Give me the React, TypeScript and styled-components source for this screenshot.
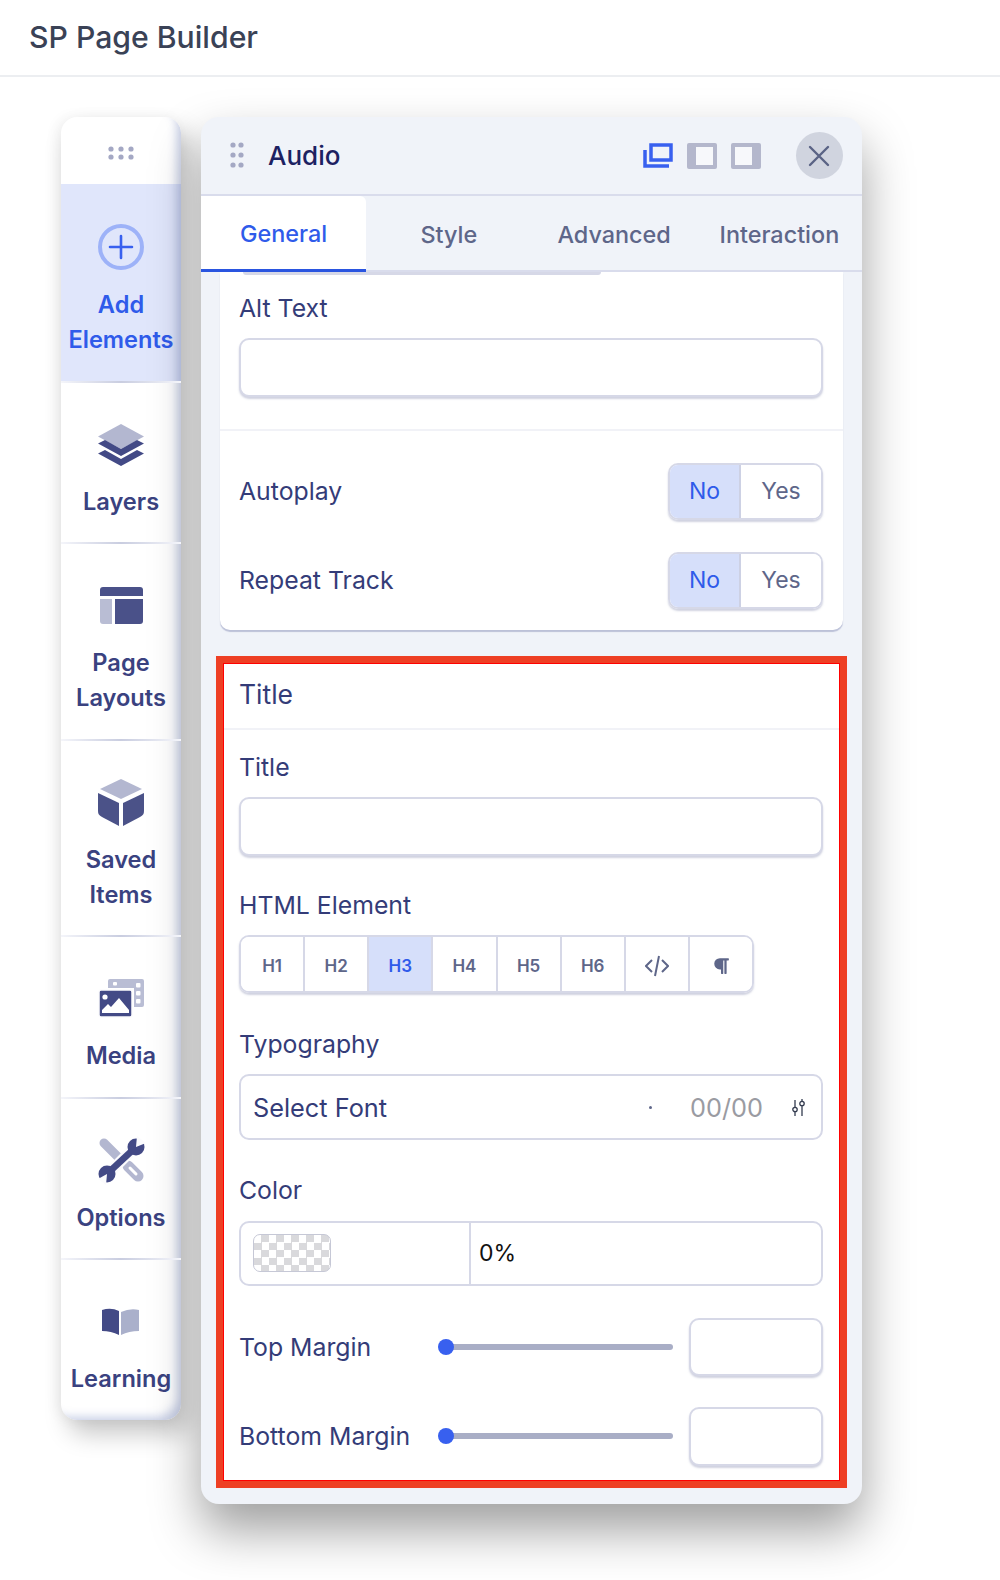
import React from 'react';
import styled, { createGlobalStyle } from 'styled-components';
import { FaParagraph } from 'react-icons/fa';

const GlobalStyle = createGlobalStyle`
  html, body { margin: 0; padding: 0; background: #fff; }
  body { font-family: Inter, "Liberation Sans", sans-serif; overflow: hidden; }
  * { box-sizing: border-box; }
`;

const Page = styled.div`
  width: 1000px;
  height: 1580px;
  overflow: hidden;
  background: #fff;
`;

const TopBar = styled.header`
  height: 77px;
  padding-left: 29px;
  display: flex;
  align-items: center;
  border-bottom: 2px solid #eceef1;
  font-size: 30.2px;
  font-weight: 500;
  color: #3a4256;
  padding-bottom: 2px;
`;

const Workspace = styled.main`
  display: flex;
  align-items: flex-start;
  gap: 20px;
  padding: 40px 0 0 61px;
`;

// Left rail with the builder sections.
const Sidebar = styled.nav`
  width: 120px;
  background: #fff;
  border-radius: 16px;
  overflow: hidden;
  box-shadow: 8px 14px 24px rgba(0, 0, 0, 0.22), -4px 0 14px rgba(0, 0, 0, 0.05);
  position: relative;
  &::after {
    content: '';
    position: absolute;
    inset: 0;
    border-radius: 16px;
    pointer-events: none;
    box-shadow: inset -9px -8px 10px -5px rgba(125, 140, 195, 0.42);
  }
`;

const RailGrip = styled.div`
  height: 67px;
  padding-top: 4px;
  display: flex;
  align-items: center;
  justify-content: center;
`;

const RailItem = styled.div<{ $active?: boolean }>`
  padding: 40px 0 23.5px;
  display: flex;
  flex-direction: column;
  align-items: center;
  gap: 17px;
  background: ${p => (p.$active ? '#e0e6fb' : 'transparent')};
  color: ${p => (p.$active ? '#2f5bea' : '#3a4280')};
  svg { overflow: visible; }
`;

const RailLabel = styled.div`
  font-size: 23.6px;
  font-weight: 600;
  line-height: 35px;
  text-align: center;
  white-space: pre-line;
  margin: 0 -6px;
`;

const RailRule = styled.div`
  height: 2px;
  margin-bottom: -2px;
  position: relative;
  z-index: 1;
  background: linear-gradient(90deg, #f4f5fa 0%, #c9cde0 50%, #f4f5fa 100%);
`;

// Settings window.
const Panel = styled.section`
  width: 661px;
  background: #f0f3f9;
  border-radius: 18px;
  padding-bottom: 16px;
  position: relative;
  box-shadow: 0 26px 50px rgba(0, 0, 0, 0.38);
`;

const PanelHead = styled.div`
  height: 79px;
  padding: 0 19.5px 0 29px;
  display: flex;
  align-items: center;
  border-bottom: 2px solid #d9dcec;
`;

const PanelTitle = styled.h1`
  margin: 0 0 0 24px;
  font-size: 26px;
  font-weight: 500;
  color: #1c2162;
  flex: 1;
`;

const ViewIcons = styled.div`
  display: flex;
  gap: 14px;
  margin-right: 35px;
  align-items: center;
`;

const CloseButton = styled.div`
  width: 47px;
  height: 47px;
  border-radius: 50%;
  background: #d0d4df;
  display: flex;
  align-items: center;
  justify-content: center;
`;

const TabStrip = styled.div`
  height: 76px;
  display: flex;
  border-bottom: 2px solid #d9dcec;
`;

const Tab = styled.div<{ $active?: boolean }>`
  flex: 1;
  display: flex;
  align-items: center;
  justify-content: center;
  padding-top: 2px;
  font-size: 23.4px;
  font-weight: 500;
  color: ${p => (p.$active ? '#2f5bea' : '#5e6689')};
  background: ${p => (p.$active ? '#fff' : 'transparent')};
  border-radius: ${p => (p.$active ? '0 6px 0 0' : '0')};
  border-bottom: ${p => (p.$active ? '3px solid #2a55e0' : '0')};
  height: ${p => (p.$active ? '76px' : '74px')};
`;

const PanelBody = styled.div`
  padding: 0 15px;
`;

const SettingsCard = styled.div`
  margin: 0 4px 26px;
  background: #fff;
  border-radius: 0 0 10px 10px;
  box-shadow: 0 2px 1px #bcc1d8;
  padding-bottom: 21px;
`;

const ClippedInput = styled.div`
  width: 358px;
  height: 3px;
  margin-left: 23px;
  background: #d6d8e7;
  border-radius: 0 0 6px 6px;
`;

const CardBlock = styled.div`
  padding: 17px 20px 32px 19px;
  border-bottom: 2px solid #f1f2f7;
`;

const FieldLabel = styled.label`
  display: block;
  font-size: 24.8px;
  line-height: 32px;
  color: #343c78;
`;

const SectionTitle = styled(FieldLabel)`
  font-size: 26.5px;
`;

const TextInput = styled.div`
  height: 58.5px;
  margin-top: 14px;
  background: #fff;
  border: 2px solid #d6d8e7;
  border-radius: 10px;
  box-shadow: 0 2px 2px rgba(120, 125, 165, 0.35);
`;

const ToggleRows = styled.div`
  padding: 32px 20px 0 19px;
  display: flex;
  flex-direction: column;
  gap: 32px;
`;

const ToggleRow = styled.div`
  display: flex;
  align-items: center;
  justify-content: space-between;
`;

const Toggle = styled.div`
  width: 155px;
  height: 57px;
  display: flex;
  border: 2px solid #d6d8e7;
  border-radius: 10px;
  overflow: hidden;
  box-shadow: 0 2px 2px rgba(120, 125, 165, 0.35);
`;

const ToggleOption = styled.div<{ $on?: boolean }>`
  width: ${p => (p.$on ? '72px' : '81px')};
  display: flex;
  align-items: center;
  justify-content: center;
  font-size: 23px;
  background: ${p => (p.$on ? '#d6dffa' : '#fff')};
  color: ${p => (p.$on ? '#2f5bea' : '#5e6689')};
  border-right: ${p => (p.$on ? '2px solid #cdd1e4' : '0')};
`;

// Highlighted block with the annotation frame.
const TitleSection = styled.div`
  background: #fff;
  border: 8px solid #ee3f24;
  outline: 1px solid #f00;
  outline-offset: -8px;
`;

const SectionHead = styled.div`
  height: 66px;
  padding: 14px 15px 0;
  border-bottom: 2px solid #f1f2f7;
`;

const SectionBody = styled.div`
  padding: 0 16px 14px 15px;
`;

const Field = styled.div<{ $top: number }>`
  margin-top: ${p => p.$top}px;
`;

const ButtonGroup = styled.div`
  width: 515px;
  height: 58px;
  margin-top: 14px;
  display: flex;
  border: 2px solid #d6d8e7;
  border-radius: 10px;
  overflow: hidden;
  box-shadow: 0 2px 2px rgba(120, 125, 165, 0.35);
`;

const HeadingButton = styled.div<{ $on?: boolean }>`
  flex: 1;
  display: flex;
  align-items: center;
  justify-content: center;
  padding-top: 4px;
  font-size: 17px;
  font-weight: 600;
  color: ${p => (p.$on ? '#2f5bea' : '#5e6689')};
  background: ${p => (p.$on ? '#d6dffa' : '#fff')};
  border-right: 2px solid #d6d8e7;
  &:last-child { border-right: 0; }
`;

const FontSelect = styled.div`
  height: 66px;
  margin-top: 14px;
  padding: 0 16px 0 12px;
  display: flex;
  align-items: center;
  border: 2px solid #d6d8e7;
  border-radius: 10px;
  font-size: 25.3px;
  color: #343c78;
`;

const FontName = styled.span`
  flex: 1;
`;

const FontDot = styled.span`
  width: 3px;
  height: 3px;
  border-radius: 50%;
  background: #5e6689;
  margin-right: 38px;
`;

const FontSize = styled.span`
  color: #9a9ba2;
  margin-right: 29px;
`;

const ColorBox = styled.div`
  height: 65px;
  margin-top: 15px;
  display: flex;
  border: 2px solid #d6d8e7;
  border-radius: 10px;
`;

const ColorPick = styled.div`
  width: 230px;
  padding-left: 12px;
  display: flex;
  align-items: center;
  border-right: 2px solid #d6d8e7;
`;

const Swatch = styled.div`
  width: 78px;
  height: 38px;
  border-radius: 7px;
  border: 1px solid #c6c8d6;
  background: repeating-conic-gradient(#d9d9dc 0% 25%, #fff 0% 50%) 0 0 / 15px 15px;
`;

const ColorValue = styled.div`
  flex: 1;
  display: flex;
  align-items: center;
  padding-left: 8px;
  font-size: 23px;
  color: #111;
`;

const SliderRow = styled.div<{ $top: number }>`
  margin-top: ${p => p.$top}px;
  display: flex;
  align-items: center;
`;

const SliderLabel = styled(FieldLabel)`
  width: 200px;
  white-space: nowrap;
`;

const Track = styled.div`
  width: 234px;
  height: 6px;
  background: #a9aec6;
  border-radius: 3px;
  position: relative;
`;

const Thumb = styled.span`
  position: absolute;
  left: -1px;
  top: -5px;
  width: 16px;
  height: 16px;
  border-radius: 50%;
  background: #3860ef;
`;

const NumberInput = styled(TextInput)`
  width: 134px;
  margin: 0 0 0 16px;
`;

const RailGripIcon = () => (
  <svg width="26" height="14" viewBox="0 0 26 14" fill="#a4a8c4">
    {[3, 13, 23].map(x => [3, 11].map(y => <circle key={`${x}-${y}`} cx={x} cy={y} r="2.6" />))}
  </svg>
);

const PanelGripIcon = () => (
  <svg width="14" height="28" viewBox="0 0 14 28" fill="#a4a8c4">
    {[3, 11].map(x => [3, 13, 23].map(y => <circle key={`${x}-${y}`} cx={x} cy={y} r="2.6" />))}
  </svg>
);

const PlusIcon = () => (
  <svg width="46" height="46" viewBox="0 0 46 46" fill="none">
    <circle cx="23" cy="23" r="21" stroke="#9db2f8" strokeWidth="4" />
    <path d="M23 12v22M12 23h22" stroke="#3860ef" strokeWidth="2.6" strokeLinecap="round" />
  </svg>
);

const LayersIcon = () => (
  <svg width="46" height="46" viewBox="0 -1 46 46">
    <path d="M23 2l23 12.500L23 27 0 14.500z" fill="#b3b7d0" />
    <path d="M7 18l16 9 16-9 7 3.500L23 34 0 21.500z" fill="#434a86" />
    <path d="M7 28l16 9 16-9 7 3.500L23 44 0 31.500z" fill="#434a86" />
  </svg>
);

const LayoutsIcon = () => (
  <svg width="46" height="46" viewBox="0 0 46 46">
    <path d="M2 8a3 3 0 0 1 3-3h37a3 3 0 0 1 3 3v6H2z" fill="#4a5189" />
    <path d="M2 17h12v25H5a3 3 0 0 1-3-3z" fill="#b9bdd4" />
    <path d="M17 17h28v22a3 3 0 0 1-3 3H17z" fill="#4a5189" />
  </svg>
);

const CubeIcon = () => (
  <svg width="46" height="46" viewBox="0 0 46 46">
    <path d="M23 0l21 10-21 10L2 10z" fill="#b3b7d0" />
    <path d="M0 14l21 10v23L4 38c-3-2-4-3-4-6z" fill="#4b5288" />
    <path d="M46 14L25 24v23l17-9c3-2 4-3 4-6z" fill="#4b5288" />
  </svg>
);

const MediaIcon = () => (
  <svg width="46" height="46" viewBox="0 -2 46 46">
    <path d="M12 2h32a2 2 0 0 1 2 2v24a2 2 0 0 1-2 2h-8V11H10V4a2 2 0 0 1 2-2z" fill="#b9bdd4" />
    <g fill="#fff">
      <rect x="38" y="6" width="4.500" height="4.500" rx="1" />
      <rect x="38" y="14" width="4.500" height="4.500" rx="1" />
      <rect x="38" y="22" width="4.500" height="4.500" rx="1" />
      <rect x="15" y="5" width="4" height="3.500" rx="1" />
    </g>
    <rect x="1" y="13" width="33" height="27" rx="2" fill="#434a86" stroke="#fbfbfd" strokeWidth="1.500" />
    <circle cx="7" cy="20" r="2.600" fill="#fff" />
    <path d="M4 36v-3l6-6 3 3 8-9 10 12v3z" fill="#fff" />
  </svg>
);

const ToolsIcon = () => (
  <svg width="46" height="46" viewBox="0 -1 46 46" fill="none">
    <path d="M6 5l16 16" stroke="#b3b7d0" strokeWidth="9" strokeLinecap="round" />
    <path d="M30 28l10 10" stroke="#b3b7d0" strokeWidth="11" strokeLinecap="round" />
    <path d="M32 30l6 6" stroke="#fff" strokeWidth="3" strokeLinecap="round" />
    <path d="M8 38L36 10" stroke="#fbfbfd" strokeWidth="11" />
    <path d="M10 35L38 9" stroke="#434a86" strokeWidth="6.500" />
    <circle cx="38" cy="9" r="8.500" fill="#434a86" />
    <path d="M38 9l1-11 9 7z" fill="#fbfbfd" />
    <circle cx="9" cy="36" r="8.500" fill="#434a86" />
    <path d="M9 36l-1 11-8-6z" fill="#fbfbfd" />
  </svg>
);

const BookIcon = () => (
  <svg width="46" height="46" viewBox="0 -1 46 46">
    <path d="M4 11q9-3 17 1v24q-8-4-17-4z" fill="#434a86" />
    <path d="M23 13q9-4 18-2v21q-10 0-18 4z" fill="#aab0cb" />
  </svg>
);

const RestoreIcon = () => (
  <svg width="30" height="26" viewBox="0 0 30 26" fill="none">
    <path d="M2 7v16h24" stroke="#3860ef" strokeWidth="3.500" />
    <rect x="8" y="2" width="20" height="15" stroke="#3860ef" strokeWidth="3.500" />
  </svg>
);

const DockLeftIcon = () => (
  <svg width="30" height="26" viewBox="0 0 30 26">
    <rect width="30" height="26" rx="2" fill="#b4b7cc" />
    <rect x="9" y="4" width="17" height="18" fill="#f7f8fb" />
  </svg>
);

const DockRightIcon = () => (
  <svg width="30" height="26" viewBox="0 0 30 26">
    <rect width="30" height="26" rx="2" fill="#b4b7cc" />
    <rect x="4" y="4" width="17" height="18" fill="#f7f8fb" />
  </svg>
);

const CloseIcon = () => (
  <svg width="22" height="22" viewBox="0 0 22 22" fill="none">
    <path d="M2 2l18 18M20 2L2 20" stroke="#5a6385" strokeWidth="2.400" strokeLinecap="round" />
  </svg>
);

const CodeIcon = () => (
  <svg width="24" height="22" viewBox="0 0 24 22" fill="none" stroke="#5e6689" strokeWidth="2">
    <path d="M7 5l-6 6 6 6M17 5l6 6-6 6M14 1l-4 20" />
  </svg>
);

const TuneIcon = () => (
  <svg width="13" height="17" viewBox="0 0 13 17" fill="none" stroke="#343c50" strokeWidth="1.300">
    <path d="M3 1v7M3 13v4M10 0v2M10 7v10" />
    <circle cx="3" cy="10.500" r="2.200" />
    <circle cx="10" cy="4.500" r="2.200" />
  </svg>
);

const railItems = [
  { label: 'Add\nElements', icon: <PlusIcon />, active: true },
  { label: 'Layers', icon: <LayersIcon /> },
  { label: 'Page\nLayouts', icon: <LayoutsIcon /> },
  { label: 'Saved\nItems', icon: <CubeIcon /> },
  { label: 'Media', icon: <MediaIcon /> },
  { label: 'Options', icon: <ToolsIcon /> },
  { label: 'Learning', icon: <BookIcon /> },
];

const tabs = ['General', 'Style', 'Advanced', 'Interaction'];

const YesNo = () => (
  <Toggle>
    <ToggleOption $on>No</ToggleOption>
    <ToggleOption>Yes</ToggleOption>
  </Toggle>
);

const App: React.FC = () => (
  <Page>
    <GlobalStyle />
    <TopBar>SP Page Builder</TopBar>
    <Workspace>
      <Sidebar>
        <RailGrip>
          <RailGripIcon />
        </RailGrip>
        {railItems.map((item, i) => (
          <React.Fragment key={item.label}>
            {i > 0 && <RailRule />}
            <RailItem $active={item.active}>
              {item.icon}
              <RailLabel>{item.label}</RailLabel>
            </RailItem>
          </React.Fragment>
        ))}
      </Sidebar>

      <Panel>
        <PanelHead>
          <PanelGripIcon />
          <PanelTitle>Audio</PanelTitle>
          <ViewIcons>
            <RestoreIcon />
            <DockLeftIcon />
            <DockRightIcon />
          </ViewIcons>
          <CloseButton>
            <CloseIcon />
          </CloseButton>
        </PanelHead>
        <TabStrip>
          {tabs.map((tab, i) => (
            <Tab key={tab} $active={i === 0}>{tab}</Tab>
          ))}
        </TabStrip>
        <PanelBody>
          <SettingsCard>
            <ClippedInput />
            <CardBlock>
              <FieldLabel>Alt Text</FieldLabel>
              <TextInput />
            </CardBlock>
            <ToggleRows>
              <ToggleRow>
                <FieldLabel>Autoplay</FieldLabel>
                <YesNo />
              </ToggleRow>
              <ToggleRow>
                <FieldLabel>Repeat Track</FieldLabel>
                <YesNo />
              </ToggleRow>
            </ToggleRows>
          </SettingsCard>

          <TitleSection>
            <SectionHead>
              <SectionTitle>Title</SectionTitle>
            </SectionHead>
            <SectionBody>
              <Field $top={21.5}>
                <FieldLabel>Title</FieldLabel>
                <TextInput />
              </Field>
              <Field $top={33}>
                <FieldLabel>HTML Element</FieldLabel>
                <ButtonGroup>
                  <HeadingButton>H1</HeadingButton>
                  <HeadingButton>H2</HeadingButton>
                  <HeadingButton $on>H3</HeadingButton>
                  <HeadingButton>H4</HeadingButton>
                  <HeadingButton>H5</HeadingButton>
                  <HeadingButton>H6</HeadingButton>
                  <HeadingButton><CodeIcon /></HeadingButton>
                  <HeadingButton><FaParagraph size={18} /></HeadingButton>
                </ButtonGroup>
              </Field>
              <Field $top={35.5}>
                <FieldLabel>Typography</FieldLabel>
                <FontSelect>
                  <FontName>Select Font</FontName>
                  <FontDot />
                  <FontSize>00/00</FontSize>
                  <TuneIcon />
                </FontSelect>
              </Field>
              <Field $top={33.5}>
                <FieldLabel>Color</FieldLabel>
                <ColorBox>
                  <ColorPick>
                    <Swatch />
                  </ColorPick>
                  <ColorValue>0%</ColorValue>
                </ColorBox>
              </Field>
              <SliderRow $top={32}>
                <SliderLabel>Top Margin</SliderLabel>
                <Track><Thumb /></Track>
                <NumberInput />
              </SliderRow>
              <SliderRow $top={31}>
                <SliderLabel>Bottom Margin</SliderLabel>
                <Track><Thumb /></Track>
                <NumberInput />
              </SliderRow>
            </SectionBody>
          </TitleSection>
        </PanelBody>
      </Panel>
    </Workspace>
  </Page>
);

export default App;
